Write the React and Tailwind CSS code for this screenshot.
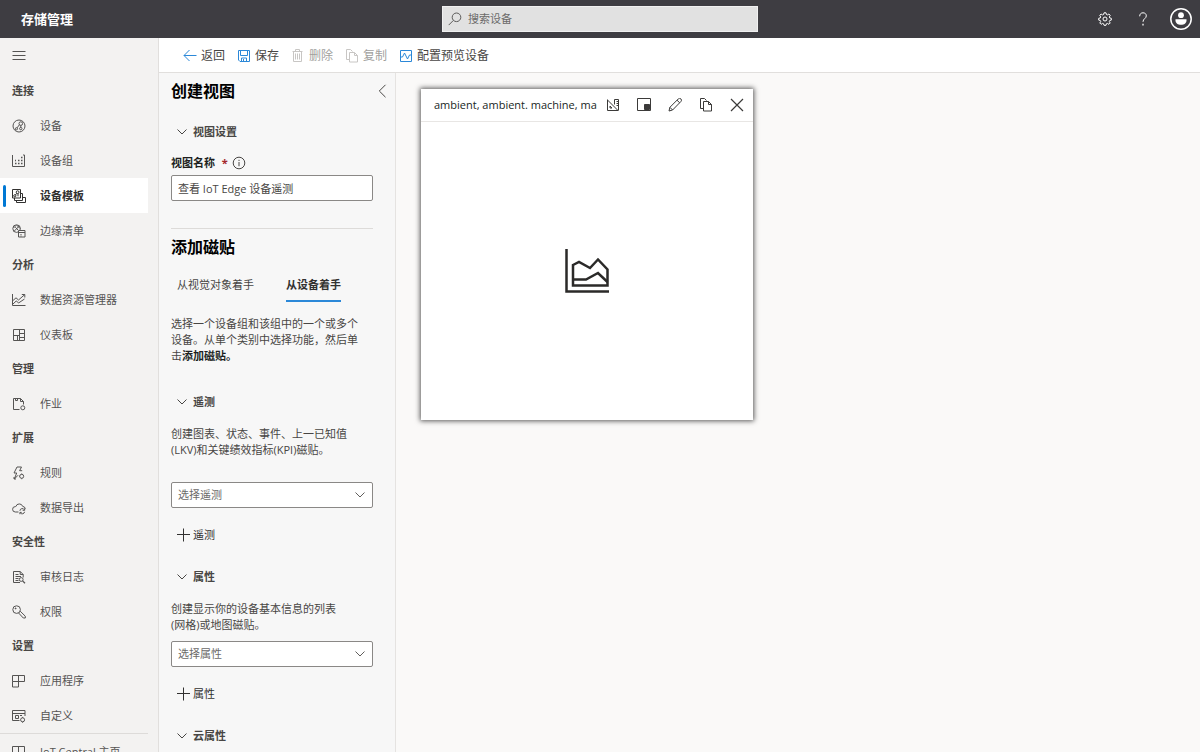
const Icon = ({ children, className = 'w-[14px] h-[14px]' }) => (
  <svg
    viewBox="0 0 14 14"
    className={`${className} shrink-0`}
    fill="none"
    stroke="currentColor"
    strokeWidth="1"
    aria-hidden="true"
  >
    {children}
  </svg>
);

const icons = {
  devices: (
    <Icon>
      <circle cx="7" cy="7" r="6" />
      <circle cx="8.8" cy="4.6" r="1.8" />
      <circle cx="8.8" cy="9.6" r="1.2" />
      <circle cx="4.4" cy="9.8" r="1.1" />
      <path d="M7.4 5.8 5 8.9M8.8 6.4v2" />
    </Icon>
  ),
  groups: (
    <Icon>
      <path d="M.5 1v11.5h12V1H11" />
      <path d="M3 9.5h1.5M6 9.5h1.500M9 9.5h1.5M6 6.500h1.5M9 6.5h1.5M9 3.5h1.5M3 6.5h1" strokeWidth="1.5" />
    </Icon>
  ),
  templates: (
    <Icon>
      <path d="M.5.5h8v8.500h-8z" />
      <circle cx="5.6" cy="3.2" r="1.4" />
      <circle cx="2.8" cy="6.8" r="1.1" />
      <path d="M4.700 4.300 3.400 6M6 4.600v2.700M2.500 9v2.500h8v-7H9M4.500 11.500v2h9v-5h-2.500" />
    </Icon>
  ),
  manifests: (
    <Icon>
      <circle cx="4.6" cy="4.6" r="3.800" />
      <path d="M2 7.300 7.300 2M3.300 3.200l2.800 2.900M4.700 1.200 8.200 4.700M1.500 4 4 1.500" />
      <path d="M6.500 6.500h6.500v6.500H6.500zM6.500 8.500h6.500" fill="#f3f2f1" />
      <path d="M8.500 10.500h1M8.500 12h1" />
    </Icon>
  ),
  explorer: (
    <Icon>
      <path d="M.5 1v11.500h13M1 7.500 4 4.800 6.500 7 12.500 1.800M9.800 1.500h3v3M1 11l3.200-3 2.500 1.900L12.500 6" />
    </Icon>
  ),
  dashboard: (
    <Icon>
      <path d="M1.5 1.5h11v11h-11zM7.5 1.5v11M1.5 7.5h6M7.5 5.500h5M5.500 7.500v5M7.500 9.500h5" />
    </Icon>
  ),
  jobs: (
    <Icon>
      <path d="M7.500 12.5H1.5v-11h7l3 3v3M8.5 1.5v3h3M3.5 1.5v2h2v-2" />
      <circle cx="10.8" cy="10.8" r="2" />
    </Icon>
  ),
  rules: (
    <Icon>
      <path d="M5 1h4.5L7.6 4.7h2.6M5 1 2 7h2.7L2.3 13l3.8-3.8M2 11v2h2" />
      <circle cx="9.7" cy="10.3" r="2" />
      <path d="M9.7 7.6v.8M9.7 12.3v.9M7 10.3h.7" />
    </Icon>
  ),
  exports: (
    <Icon>
      <path d="M6.5 11H3.3a2.7 2.7 0 0 1 0-5.4h.5a3.6 3.6 0 0 1 6.9-.2 2.8 2.8 0 0 1 2.6 2.4" />
      <path d="M7.9 9.8a2.4 2.4 0 0 1 4.5-1M12.7 7.3v2h-2M12.6 10.8a2.4 2.4 0 0 1-4.4.9M7.9 13.2v-1.8h1.8" />
    </Icon>
  ),
  audit: (
    <Icon>
      <path d="M8 12.5H1.5v-11h6.7l3 3v3M8.2 1.500v3h3M3.5 4.500h3M3.5 6.500h5.5M3.5 8.5h3M3.5 10.5h3" />
      <circle cx="9.2" cy="9.5" r="1.9" />
      <path d="M10.6 10.9 13 13.2" strokeWidth="1.3" />
    </Icon>
  ),
  permissions: (
    <Icon>
      <circle cx="4.6" cy="4.6" r="3.8" />
      <circle cx="3.6" cy="3.4" r=".5" fill="currentColor" />
      <path d="M8.2 6.2 13.3 11.2V13H11.3L6.6 8" />
    </Icon>
  ),
  apps: (
    <Icon>
      <path d="M.5 1.5h12v6h-12zM6.5 1.500v11.500h-6V7.5" />
    </Icon>
  ),
  customize: (
    <Icon>
      <path d="M7.5 11.5h-7v-10h12.500v5.500M.5 4.500h12.500M3.500 6.500h3v3h-3zM8 6.500h2" />
      <circle cx="10.6" cy="10.8" r="2" />
      <path d="M10.6 7.9v.9M10.6 12.8v.9" />
    </Icon>
  ),
};

const navGroups = [
  { title: '连接', items: [['设备', 'devices'], ['设备组', 'groups'], ['设备模板', 'templates'], ['边缘清单', 'manifests']] },
  { title: '分析', items: [['数据资源管理器', 'explorer'], ['仪表板', 'dashboard']] },
  { title: '管理', items: [['作业', 'jobs']] },
  { title: '扩展', items: [['规则', 'rules'], ['数据导出', 'exports']] },
  { title: '安全性', items: [['审核日志', 'audit'], ['权限', 'permissions']] },
  { title: '设置', items: [['应用程序', 'apps'], ['自定义', 'customize']] },
];

const NavItem = ({ label, icon, active }) => (
  <a
    href="#"
    aria-current={active ? 'page' : undefined}
    className={`flex items-center h-[35px] pl-[3px] mr-[10px] whitespace-nowrap ${
      active ? 'bg-white font-bold text-[#323130]' : 'text-[#555453]'
    }`}
  >
    <span className={`w-[3px] h-[22px] rounded-sm mr-[6px] ${active ? 'bg-[#0078d4]' : ''}`} />
    {icons[icon]}
    <span className="ml-[14px]">{label}</span>
  </a>
);

const Header = () => (
  <header className="grid grid-cols-[1fr_316px_1fr] items-center h-[38px] shrink-0 bg-[#3e3d42] text-white">
    <h1 className="pl-[21px] text-[13px] font-bold">存储管理</h1>
    <label className="flex items-center h-[26px] px-[5px] gap-[6px] bg-[#e1e1e1] border border-[#f0f0f0] text-[#5c5b5a]">
      <Icon>
        <circle cx="8.5" cy="5.3" r="4.3" />
        <path d="M5.4 8.4.7 13.1" />
      </Icon>
      <input
        type="text"
        aria-label="搜索设备"
        placeholder="搜索设备"
        className="w-full bg-transparent outline-none placeholder:text-[#6b6a69]"
      />
    </label>
    <div className="flex justify-end items-center pr-2">
      <button type="button" aria-label="设置" className="flex justify-center w-[38px]">
        <Icon>
          <circle cx="7" cy="7" r="2" />
          <path d="M6 .8h2l.4 1.7 1 .4 1.5-.9 1.3 1.4-.9 1.5.4 1 1.600.4v1.8l-1.6.4-.4 1 .9 1.5-1.3 1.3-1.5-.9-1 .4L8 13.3H6l-.4-1.5-1-.4-1.5.9L1.8 11l.9-1.5-.4-1L.7 8.1V6.3l1.6-.4.4-1-.9-1.5L3.1 2l1.5.9 1-.4z" />
        </Icon>
      </button>
      <button type="button" aria-label="帮助" className="flex justify-center w-[38px]">
        <Icon>
          <path d="M3.7 4.3C3.7 2 5 .8 7 .8s3.3 1.2 3.3 3.1C10.3 6.5 7 6.7 7 9.8" />
          <path d="M7 11.8v1.6" strokeWidth="1.3" />
        </Icon>
      </button>
      <button type="button" aria-label="帐户" className="flex justify-end w-[30px]">
        <svg viewBox="0 0 22 22" className="w-[22px] h-[22px]" aria-hidden="true">
          <circle cx="11" cy="11" r="10.2" fill="none" stroke="white" strokeWidth="1.5" />
          <circle cx="11" cy="7.2" r="2.9" fill="white" />
          <path d="M5.5 11.3h11v1.2c0 2.8-2.4 4.3-5.5 4.3s-5.5-1.5-5.5-4.3z" fill="white" />
        </svg>
      </button>
    </div>
  </header>
);

const Sidebar = () => (
  <nav className="w-[159px] shrink-0 overflow-hidden bg-[#f3f2f1] border-r border-[#e1dfdd]">
    <button type="button" aria-label="菜单" className="flex items-center w-full h-9 pl-3 text-[#555453]">
      <Icon>
        <path d="M.5 2.5h13M.5 6.5h13M.5 10.5h13" />
      </Icon>
    </button>
    {navGroups.map((group) => (
      <section key={group.title}>
        <h2 className="flex items-center h-[34px] pl-3 font-bold text-[#484644]">{group.title}</h2>
        {group.items.map(([label, icon]) => (
          <NavItem key={label} label={label} icon={icon} active={label === '设备模板'} />
        ))}
      </section>
    ))}
    <div className="mr-[10px] border-t border-[#dddbd9]" />
    <NavItem label="IoT Central 主页" icon="apps" />
  </nav>
);

const ToolButton = ({ icon, label, color, disabled }) => (
  <button
    type="button"
    disabled={disabled}
    className={`flex items-center gap-1 ${disabled ? 'text-[#a19f9d]' : 'text-[#484644]'}`}
  >
    <span className={color}>{icon}</span>
    {label}
  </button>
);

const Toolbar = () => (
  <div className="flex items-center gap-3 h-[35px] shrink-0 pt-px pl-6 bg-white border-b border-[#e1dfdd] text-xs">
    <ToolButton
      label="返回"
      color="text-[#2b88d8]"
      icon={<Icon><path d="M13.5 6.5H1M6.5 1 1 6.500l5.500 5.500" /></Icon>}
    />
    <ToolButton
      label="保存"
      color="text-[#2b88d8]"
      icon={<Icon><path d="M1.5 1.5h11v11H3l-1.500-1.500zM3.5 1.5v5h7v-5M4.500 12.500V9h5v3.500M6.500 10v2.500" /></Icon>}
    />
    <ToolButton
      label="删除"
      color="text-[#c8c6c4]"
      disabled
      icon={<Icon><path d="M1.500 2.500h10M4.500 2.500v-2h4v2M2.500 2.500v10h8v-10M4.500 4.500v6M6.500 4.500v6M8.500 4.500v6" /></Icon>}
    />
    <ToolButton
      label="复制"
      color="text-[#c8c6c4]"
      disabled
      icon={<Icon><path d="M4.5 10.5h-3v-10h4l2 2M4.5 3.5h5l3 3v6.500h-8zM9.5 3.5v3h3" /></Icon>}
    />
    <ToolButton
      label="配置预览设备"
      color="text-[#2b88d8]"
      icon={<Icon><path d="M1.5 1.5h11v11h-11zM1.5 8h2l2-4 3 6 2-4h2" /></Icon>}
    />
  </div>
);

const SectionButton = ({ label, className }) => (
  <button type="button" aria-expanded="true" className={`flex items-center gap-1 h-[22px] pl-1 font-bold text-[#484644] ${className}`}>
    <Icon>
      <path d="M2.5 4.5 7 9l4.500-4.500" />
    </Icon>
    {label}
  </button>
);

const AddButton = ({ label }) => (
  <button type="button" className="flex items-center gap-[3px] h-[22px] mt-4 pl-[5px] text-[#323130]">
    <Icon>
      <path d="M7.500.5v13M1 6.500h13" />
    </Icon>
    {label}
  </button>
);

const Dropdown = ({ label, className }) => (
  <div className={`relative ${className}`}>
    <select
      aria-label={label}
      className="block w-full h-[26px] pl-[6px] pr-6 appearance-none bg-white border border-[#8a8886] rounded-xs text-[#6b6a69] outline-none"
    >
      <option>{label}</option>
    </select>
    <span className="absolute right-[6px] top-[6px] pointer-events-none text-[#605e5c]">
      <Icon>
        <path d="M2.5 4.5 7 9l4.500-4.500" />
      </Icon>
    </span>
  </div>
);

const ViewPanel = () => (
  <aside className="w-[237px] shrink-0 overflow-hidden pl-3 pr-[22px] bg-[#f7f7f7] border-r border-[#e5e3e1] text-[#484644]">
    <div className="flex items-center justify-between h-9 -mr-4">
      <h2 className="text-base font-bold text-black">创建视图</h2>
      <button type="button" aria-label="折叠">
        <Icon>
          <path d="M10.500.8 4.300 7l6.200 6.200" />
        </Icon>
      </button>
    </div>
    <SectionButton label="视图设置" className="mt-3" />
    <div className="flex items-center h-4 mt-3">
      <label htmlFor="view-name" className="font-bold text-[#201f1e]">
        视图名称 <span className="ml-1 text-[#a4262c]">*</span>
      </label>
      <span className="ml-1">
        <Icon>
          <circle cx="7" cy="7" r="5.8" />
          <path d="M7 6v4.2M7 3.8V5" />
        </Icon>
      </span>
    </div>
    <input
      id="view-name"
      type="text"
      defaultValue="查看 IoT Edge 设备遥测"
      className="block w-full h-[26px] mt-1 px-[6px] bg-white border border-[#8a8886] rounded-xs outline-none"
    />
    <hr className="mt-[27px] border-[#dddbd9]" />
    <h2 className="flex items-center h-9 text-base font-bold text-black">添加磁贴</h2>
    <div role="tablist" className="flex gap-8 mt-2 pl-[6px]">
      <button type="button" role="tab" aria-selected="false" className="h-[29px] pb-1 border-b-2 border-transparent">
        从视觉对象着手
      </button>
      <button
        type="button"
        role="tab"
        aria-selected="true"
        className="h-[29px] pb-1 border-b-2 border-[#2b88d8] font-bold text-[#323130]"
      >
        从设备着手
      </button>
    </div>
    <p className="mt-[14px]">
      选择一个设备组和该组中的一个或多个
      <br />
      设备。从单个类别中选择功能，然后单
      <br />
      击<strong className="text-[#201f1e]">添加磁贴。</strong>
    </p>
    <SectionButton label="遥测" className="mt-[27px]" />
    <p className="mt-[13px]">
      创建图表、状态、事件、上一已知值
      <br />
      (LKV)和关键绩效指标(KPI)磁贴。
    </p>
    <Dropdown label="选择遥测" className="mt-6" />
    <AddButton label="遥测" />
    <SectionButton label="属性" className="mt-5" />
    <p className="mt-[13px]">
      创建显示你的设备基本信息的列表
      <br />
      (网格)或地图磁贴。
    </p>
    <Dropdown label="选择属性" className="mt-2" />
    <AddButton label="属性" />
    <SectionButton label="云属性" className="mt-5" />
  </aside>
);

const TileButton = ({ label, children }) => (
  <button type="button" aria-label={label} className="flex justify-center w-[31px] shrink-0">
    <Icon>{children}</Icon>
  </button>
);

const Tile = () => (
  <article className="w-[332px] bg-white shadow-[0_0_5px_1px_rgba(0,0,0,0.65)]">
    <div className="flex items-center h-[33px] pl-[13px] pr-px border-b border-[#e8e6e4] text-[#3b3a39]">
      <h3 className="flex-1 overflow-hidden whitespace-nowrap text-[#201f1e]">ambient, ambient. machine, machine</h3>
      <TileButton label="单位">
        <path d="M1.500 1.500v11h10.500L1.500 2M4 8v2h2zM8.500 6.500v-5h4v11M10.500 3.500h2M10.500 5.500h2M10.500 7.500h2" />
      </TileButton>
      <TileButton label="大小">
        <path d="M.5.500h13v12h-13z" />
        <path d="M7.5 6.500h5v5h-5z" fill="currentColor" />
      </TileButton>
      <TileButton label="编辑">
        <path d="m1 13 .9-3.700 8.400-8.400a1.700 1.700 0 0 1 2.600 2.600L4.600 12zM9 2.200l2.700 2.600M1.900 9.300 4.600 12" />
      </TileButton>
      <TileButton label="复制">
        <path d="M4.5 10.5h-3v-10h4l2 2M4.5 3.5h5l3 3v6.500h-8zM9.5 3.5v3h3" />
      </TileButton>
      <TileButton label="关闭">
        <path d="M1 1l12 12M13 1 1 13" strokeWidth="1.2" />
      </TileButton>
    </div>
    <div className="flex items-center justify-center h-[298px]">
      <svg viewBox="0 0 46 46" className="w-[46px] h-[46px]" fill="none" stroke="#2b2a29" strokeWidth="2.5" aria-hidden="true">
        <path d="M2.500 1v42.500H45" />
        <path d="M9 17 15 14 26 20 34 11.500 43.500 21.500V37.500H9z" />
        <path d="M9 31.500H22L34 25 43.500 34" />
      </svg>
    </div>
  </article>
);

export default function App() {
  return (
    <div
      lang="zh-CN"
      className="flex flex-col h-screen overflow-hidden bg-[#faf9f8] text-[11px] leading-4 font-['Open_Sans','Noto_Sans_CJK_SC',sans-serif]"
    >
      <Header />
      <div className="flex flex-1 min-h-0">
        <Sidebar />
        <div className="flex flex-col flex-1 min-w-0">
          <Toolbar />
          <div className="flex flex-1 min-h-0">
            <ViewPanel />
            <main className="flex-1 min-w-0 pt-4 pl-[25px]">
              <Tile />
            </main>
          </div>
        </div>
      </div>
    </div>
  );
}
